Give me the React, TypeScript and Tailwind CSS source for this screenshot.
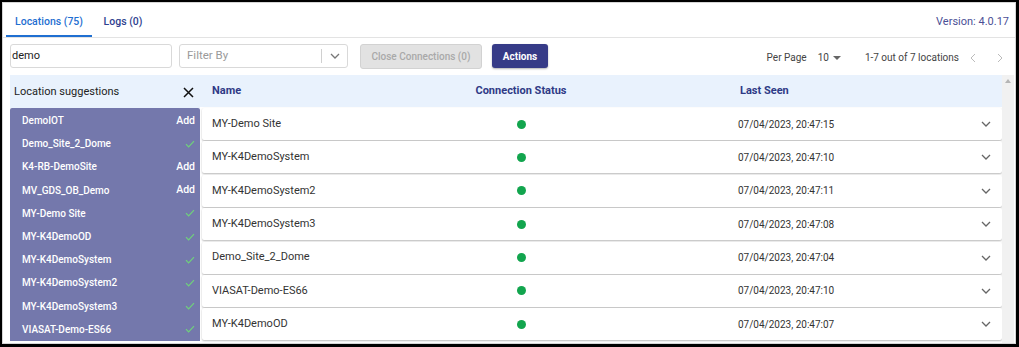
import React from "react";

const suggestions: { name: string; added: boolean }[] = [
  { name: "DemoIOT", added: false },
  { name: "Demo_Site_2_Dome", added: true },
  { name: "K4-RB-DemoSite", added: false },
  { name: "MV_GDS_OB_Demo", added: false },
  { name: "MY-Demo Site", added: true },
  { name: "MY-K4DemoOD", added: true },
  { name: "MY-K4DemoSystem", added: true },
  { name: "MY-K4DemoSystem2", added: true },
  { name: "MY-K4DemoSystem3", added: true },
  { name: "VIASAT-Demo-ES66", added: true },
];

const rows = [
  ["MY-Demo Site", "07/04/2023, 20:47:15"],
  ["MY-K4DemoSystem", "07/04/2023, 20:47:10"],
  ["MY-K4DemoSystem2", "07/04/2023, 20:47:11"],
  ["MY-K4DemoSystem3", "07/04/2023, 20:47:08"],
  ["Demo_Site_2_Dome", "07/04/2023, 20:47:04"],
  ["VIASAT-Demo-ES66", "07/04/2023, 20:47:10"],
  ["MY-K4DemoOD", "07/04/2023, 20:47:07"],
];

const Chevron = ({ className = "" }: { className?: string }) => (
  <svg width="10" height="6" viewBox="0 0 10 6" className={className}>
    <path d="M1 1l4 4 4-4" fill="none" stroke="currentColor" strokeWidth="1.3" />
  </svg>
);

const Check = () => (
  <svg width="10" height="8" viewBox="0 0 10 8">
    <path d="M1 4.2l2.6 2.6L9 1.2" fill="none" stroke="#6fd27a" strokeWidth="1.2" />
  </svg>
);

export default function App() {
  return (
    <div
      className="w-[1019px] h-[347px] overflow-hidden bg-white border-black border-l-2 border-t-2 border-r-[3px] border-b-[3px]"
      style={{ fontFamily: "Roboto, 'Liberation Sans', sans-serif" }}
    >
      <div className="h-full border border-[#d6d6d6] flex flex-col">
        {/* Tabs */}
        <div className="h-[35px] shrink-0 flex items-stretch border-b border-[#e3e3e3] pr-[6px]">
          <div className="ml-[3px] w-[86px] flex items-center justify-center text-[10.5px] font-medium text-[#1f6fd1] border-b-2 border-[#1f6fd1] pt-[5px]">
            Locations (75)
          </div>
          <div className="w-[62px] flex items-center justify-center text-[10.5px] font-medium text-[#2f3f8f] pt-[3px]">
            Logs (0)
          </div>
          <div className="flex-1" />
          <div className="flex items-center text-[11px] text-[#4b4f96] pt-[4px]">Version: 4.0.17</div>
        </div>

        {/* Controls */}
        <div className="h-[37px] shrink-0 flex items-start pt-[6px] pl-[7px] pr-[8px]">
          <div className="w-[162px] h-[24px] border border-[#d9d9d9] rounded-[3px] flex items-center pl-[1px] text-[11px] text-[#222]">
            demo
          </div>
          <div className="ml-[7px] w-[169px] h-[24px] border border-[#d9d9d9] rounded-[3px] flex items-center">
            <span className="flex-1 pl-[7px] text-[11.5px] text-[#9a9a9a]">Filter By</span>
            <span className="w-px h-[14px] bg-[#d0d0d0]" />
            <span className="w-[25px] flex justify-center text-[#777]">
              <Chevron />
            </span>
          </div>
          <div className="ml-[12px] w-[122px] h-[25px] rounded-[3px] bg-[#e2e2e2] border border-[#d2d2d2] flex items-center justify-center text-[10px] font-medium text-[#a9a9a9]">
            Close Connections (0)
          </div>
          <div className="ml-[10px] w-[56px] h-[24px] rounded-[3px] bg-[#363b87] shadow-[0_1px_2px_rgba(0,0,0,0.3)] flex items-center justify-center text-[10px] font-bold text-white">
            Actions
          </div>
          <div className="flex-1" />
          <div className="h-[27px] flex items-center text-[10px] text-[#444]">
            <span>Per Page</span>
            <span className="ml-[11px] flex items-center gap-[4px]">
              10
              <svg width="8" height="4" viewBox="0 0 8 4">
                <path d="M0 0h8L4 4z" fill="#666" />
              </svg>
            </span>
            <span className="ml-[24px]">1-7 out of 7 locations</span>
            <svg className="ml-[11px]" width="6" height="10" viewBox="0 0 6 10">
              <path d="M5 1L1 5l4 4" fill="none" stroke="#bbb" strokeWidth="1" />
            </svg>
            <svg className="ml-[21px] mr-[4px]" width="6" height="10" viewBox="0 0 6 10">
              <path d="M1 1l4 4-4 4" fill="none" stroke="#bbb" strokeWidth="1" />
            </svg>
          </div>
        </div>

        {/* Table area */}
        <div className="flex-1 flex pl-[7px] pr-[1px] min-h-0">
          {/* Suggestions */}
          <div className="w-[190px] shrink-0 flex flex-col">
            <div className="h-[33px] shrink-0 bg-[#e9f2fd] flex items-center pl-[4px] pr-[6px] pt-[2px]">
              <span className="flex-1 text-[11px] text-[#222]">Location suggestions</span>
              <svg width="11" height="11" viewBox="0 0 11 11">
                <path d="M1 1l9 9M10 1l-9 9" stroke="#111" strokeWidth="1.5" />
              </svg>
            </div>
            <div className="bg-[#7478ac] rounded-t-[2px] pt-[1px]">
              {suggestions.map((s) => (
                <div key={s.name} className="h-[23.2px] flex items-center pl-[12px] pr-[5px] text-[10px] font-medium text-white">
                  <span className="flex-1">{s.name}</span>
                  {s.added ? <Check /> : <span className="text-[10.5px]">Add</span>}
                </div>
              ))}
            </div>
          </div>

          {/* Main table */}
          <div className="flex-1 flex flex-col min-w-0">
            <div className="h-[32px] shrink-0 bg-[#e9f2fd] flex items-center text-[11px] font-bold text-[#2f3a86] pl-[2px]">
              <span className="w-[256px] pl-[10px]">Name</span>
              <span className="w-[126px] text-center">Connection Status</span>
              <span className="pl-[156px]">Last Seen</span>
            </div>
            <div className="flex flex-col pt-[1px]">
              {rows.map(([name, date]) => (
                <div
                  key={name}
                  className="h-[32px] mb-[1.4px] ml-[2px] bg-white shadow-[0_1px_2px_rgba(0,0,0,0.28)] rounded-[2px] flex items-center text-[11px] text-[#333]"
                >
                  <span className="w-[256px] pl-[10px]">{name}</span>
                  <span className="w-[126px] flex justify-center">
                    <span className="w-[9px] h-[9px] rounded-full bg-[#12a54e]" />
                  </span>
                  <span className="pl-[154px] text-[10px]">{date}</span>
                  <span className="flex-1" />
                  <span className="pr-[11px] text-[#666]">
                    <Chevron />
                  </span>
                </div>
              ))}
            </div>
          </div>

          {/* Scrollbar */}
          <div className="w-[12px] shrink-0 bg-[#f1f1f1] flex justify-center pt-[4px]">
            <svg width="6" height="4" viewBox="0 0 6 4">
              <path d="M3 0l3 4H0z" fill="#b5b5b5" />
            </svg>
          </div>
        </div>
      </div>
    </div>
  );
}
